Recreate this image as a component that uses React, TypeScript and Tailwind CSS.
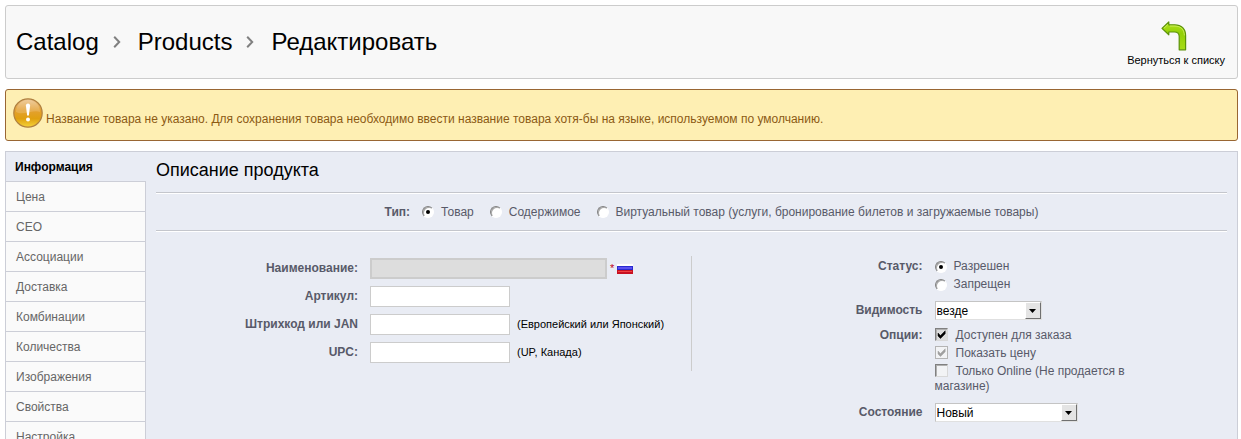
import type { InputHTMLAttributes, ReactNode, SelectHTMLAttributes } from 'react';

const TABS = [
  'Информация',
  'Цена',
  'СЕО',
  'Ассоциации',
  'Доставка',
  'Комбинации',
  'Количества',
  'Изображения',
  'Свойства',
  'Настройка',
];

function Chevron() {
  return (
    <svg viewBox="0 0 8 12" className="h-3 w-2" aria-hidden="true">
      <path d="M1.2 0.8 L6.2 6 L1.2 11.2" fill="none" stroke="#808080" strokeWidth="2" />
    </svg>
  );
}

function BackArrow() {
  return (
    <svg viewBox="0 0 26 30" className="mr-1 h-[30px] w-[26px]" aria-hidden="true">
      <defs>
        <linearGradient id="leaf" x1="0" y1="0" x2="0" y2="1">
          <stop offset="0" stopColor="#b4e61e" />
          <stop offset="0.4" stopColor="#92cf06" />
          <stop offset="1" stopColor="#a6dc16" />
        </linearGradient>
      </defs>
      <path
        d="M1 7.4 L7.8 1 V3.8 H13.6 C20.6 3.8 24.6 8 24.6 14.6 V28.8 H18.2 V15.6 C18.2 12.2 16.6 11 13.4 11 H7.8 V13.8 Z"
        fill="url(#leaf)"
        stroke="#5c9208"
        strokeWidth="1.2"
        strokeLinejoin="round"
      />
      <path d="M3 7.2 L6.8 3.6 M8.8 5 H14 C19.6 5 23.2 8.4 23.4 14.4" fill="none" stroke="#d4f26c" strokeWidth="0.8" />
    </svg>
  );
}

function WarningIcon() {
  return (
    <svg viewBox="0 0 30 30" className="h-[30px] w-[30px] shrink-0" aria-hidden="true">
      <defs>
        <linearGradient id="amber" x1="0" y1="0" x2="0" y2="1">
          <stop offset="0" stopColor="#ecc592" />
          <stop offset="0.4" stopColor="#e3a032" />
          <stop offset="0.7" stopColor="#e0a010" />
          <stop offset="1" stopColor="#f6d53a" />
        </linearGradient>
      </defs>
      <circle cx="15" cy="15" r="14.2" fill="url(#amber)" stroke="#b08040" strokeWidth="1.2" />
      <path d="M3 14 A12 12 0 0 1 27 14 C21 11 10 18 3 14 Z" fill="#fff" opacity="0.16" />
      <path d="M12.9 7.6 Q13 5.4 15 5.4 Q17 5.4 17.1 7.6 L15.9 17.6 H14.1 Z" fill="#fff" />
      <circle cx="15" cy="21.4" r="2" fill="#fff" />
    </svg>
  );
}

function Flag() {
  return (
    <svg viewBox="0 0 16 11" className="h-[11px] w-4" role="img" aria-label="Русский">
      <rect width="16" height="11" fill="#fff" />
      <rect y="3" width="16" height="4" fill="#2a2ad0" />
      <rect y="4" x="1" width="14" height="2" fill="#5a50f0" />
      <rect y="7" width="16" height="4" fill="#c81020" />
      <rect y="8" x="1" width="14" height="1" fill="#f04040" />
      <rect x="0" y="0" width="16" height="1" fill="#ececf2" />
    </svg>
  );
}

function Radio({ label, ...rest }: { label: string } & InputHTMLAttributes<HTMLInputElement>) {
  return (
    <label className="flex items-center gap-[7px]">
      <input
        type="radio"
        className="flex size-3 shrink-0 appearance-none items-center justify-center rounded-full border border-t-[#808080] border-r-white border-b-white border-l-[#808080] bg-white shadow-[inset_1px_1px_0_#a8a8a8] checked:before:size-1 checked:before:rounded-full checked:before:bg-black"
        {...rest}
      />
      {label}
    </label>
  );
}

function Check({ label, ...rest }: { label: string } & InputHTMLAttributes<HTMLInputElement>) {
  return (
    <label className="block leading-[15px] not-last:mb-[3px]">
      <span className="relative mr-2 inline-block size-[13px] align-top">
        <input
          type="checkbox"
          className="peer block size-[13px] appearance-none border border-t-[#808080] border-r-[#d8d8d8] border-b-[#d8d8d8] border-l-[#808080] bg-[#f2f3f5] shadow-[inset_1px_1px_0_#b0b0b0] checked:enabled:bg-[#dcdcdc] disabled:border-[#b4b4b4] disabled:shadow-none"
          {...rest}
        />
        <svg
          viewBox="0 0 13 13"
          className="pointer-events-none absolute inset-0 hidden size-[13px] text-black peer-checked:block peer-disabled:text-[#a0a0a0]"
          aria-hidden="true"
        >
          <path d="M3 5 L5.5 7.6 L10.2 2.8 V5.8 L5.5 10.5 L3 8 Z" fill="currentColor" stroke="currentColor" strokeWidth="0.5" />
        </svg>
      </span>
      {label}
    </label>
  );
}

function Select({ children, ...rest }: SelectHTMLAttributes<HTMLSelectElement>) {
  return (
    <div className="relative w-fit">
      <select
        className="block h-[19px] appearance-none border border-t-[#c4c4c4] border-r-[#e0e0e0] border-b-[#e0e0e0] border-l-[#c4c4c4] bg-white pr-5 pl-px text-[12px] leading-4 text-black data-[size=medium]:w-[143px] data-[size=small]:w-[107px]"
        {...rest}
      >
        {children}
      </select>
      <span className="pointer-events-none absolute inset-y-px right-px flex w-4 items-center justify-center border border-t-white border-r-[#707070] border-b-[#707070] border-l-white bg-[#e4e4e4]">
        <svg viewBox="0 0 7 4" className="h-1 w-[7px]" aria-hidden="true">
          <path d="M0 0 H7 L3.5 4 Z" fill="#000" />
        </svg>
      </span>
    </div>
  );
}

function Field({ id, label, hint, children }: { id: string; label: string; hint?: string; children?: ReactNode }) {
  return (
    <div className="flex h-[21px] items-center">
      <label htmlFor={id} className="mr-3 w-[202px] shrink-0 text-right font-bold">
        {label}
      </label>
      {children ?? <input id={id} type="text" className="h-[21px] w-[140px] border border-[#ccc] bg-white px-1" />}
      {hint && <span className="ml-[7px] text-[11px] text-black">{hint}</span>}
    </div>
  );
}

function Divider() {
  return <hr className="h-0.5 border-t border-b border-t-[#c4c6cc] border-b-white" />;
}

const sideLabel = 'w-[231px] shrink-0 text-right font-bold';

export default function App() {
  return (
    <div className="bg-white pt-[5px] pr-[3px] pl-[5px] font-['Liberation_Sans',Arial,sans-serif] text-[12px] leading-[15px] text-[#585a69]">
      <header className="flex h-[74px] items-center justify-between rounded-[3px] border border-[#ccc] bg-[#f8f8f8] pr-3 pl-[10px] text-black">
        <nav aria-label="Путь">
          <ol className="flex items-center text-[24px] leading-7">
            <li>Catalog</li>
            <li className="flex items-center">
              <span className="mr-[17px] ml-[14px]">
                <Chevron />
              </span>
              Products
            </li>
            <li className="flex items-center">
              <span className="mr-[17px] ml-[14px]">
                <Chevron />
              </span>
              <h1>Редактировать</h1>
            </li>
          </ol>
        </nav>
        <a href="#list" className="flex flex-col items-center gap-[2px] pt-1 text-[11px] leading-[15px]">
          <BackArrow />
          Вернуться к списку
        </a>
      </header>

      <div
        role="alert"
        className="mt-[10px] flex h-[52px] items-center rounded-[3px] border border-[#996633] bg-[#feefb3] pl-[7px] text-[#8c5a14]"
      >
        <span className="mb-1">
          <WarningIcon />
        </span>
        <p className="mt-2 ml-[3px]">
          Название товара не указано. Для сохранения товара необходимо ввести название товара хотя-бы на языке,
          используемом по умолчанию.
        </p>
      </div>

      <div className="mt-[10px] flex border border-[#ccced7] bg-[#e9ecf4]">
        <nav aria-label="Разделы" className="w-[140px] shrink-0">
          {TABS.map((tab, i) => (
            <a
              key={tab}
              href={`#tab-${i}`}
              aria-current={i === 0 ? 'page' : undefined}
              className={
                i === 0
                  ? 'block h-[30px] border-b border-[#ccced7] px-[9px] leading-[30px] font-bold text-black'
                  : 'block h-[30px] border-r border-b border-[#ccced7] bg-[#fafafa] px-[10px] leading-[30px] text-[#666]'
              }
            >
              {tab}
            </a>
          ))}
        </nav>

        <form className="min-w-0 flex-1 px-[10px]">
          <h2 className="pt-2 pb-3 text-[18px] leading-5 text-black">Описание продукта</h2>
          <Divider />
          <div role="radiogroup" aria-labelledby="type" className="flex h-9 items-center justify-center pl-10">
            <span id="type" className="mr-3 font-bold">
              Тип:
            </span>
            <div className="flex gap-4">
              <Radio name="type" label="Товар" defaultChecked />
              <Radio name="type" label="Содержимое" />
              <Radio name="type" label="Виртуальный товар (услуги, бронирование билетов и загружаемые товары)" />
            </div>
          </div>
          <Divider />

          <div className="grid grid-cols-2 pt-6">
            <div className="flex h-[115px] flex-col gap-[7px] border-r border-[#ccc] pt-[2px]">
              <Field id="name" label="Наименование:">
                <input
                  id="name"
                  type="text"
                  disabled
                  className="h-[21px] w-[237px] border-2 border-[#ccc] bg-[#ddd] px-1"
                />
                <span className="mx-[3px] text-[11px] text-[#c00020]">*</span>
                <Flag />
              </Field>
              <Field id="sku" label="Артикул:" />
              <Field id="ean" label="Штрихкод или JAN" hint="(Европейский или Японский)" />
              <Field id="upc" label="UPC:" hint="(UP, Канада)" />
            </div>

            <div className="pt-[3px]">
              <div role="radiogroup" aria-labelledby="status" className="flex gap-3">
                <span id="status" className={sideLabel}>
                  Статус:
                </span>
                <div className="flex flex-col gap-[3px]">
                  <Radio name="status" label="Разрешен" defaultChecked />
                  <Radio name="status" label="Запрещен" />
                </div>
              </div>
              <div className="mt-[9px] flex items-center gap-3">
                <label htmlFor="visibility" className={sideLabel}>
                  Видимость
                </label>
                <Select id="visibility" data-size="small">
                  <option>везде</option>
                </Select>
              </div>
              <div role="group" aria-labelledby="options" className="mt-2 flex gap-3">
                <span id="options" className={sideLabel}>
                  Опции:
                </span>
                <div className="w-[200px]">
                  <Check label="Доступен для заказа" defaultChecked />
                  <Check label="Показать цену" defaultChecked disabled />
                  <Check label="Только Online (Не продается в магазине)" />
                </div>
              </div>
              <div className="mt-[9px] flex items-center gap-3">
                <label htmlFor="condition" className={sideLabel}>
                  Состояние
                </label>
                <Select id="condition" data-size="medium">
                  <option>Новый</option>
                </Select>
              </div>
            </div>
          </div>
        </form>
      </div>
    </div>
  );
}
